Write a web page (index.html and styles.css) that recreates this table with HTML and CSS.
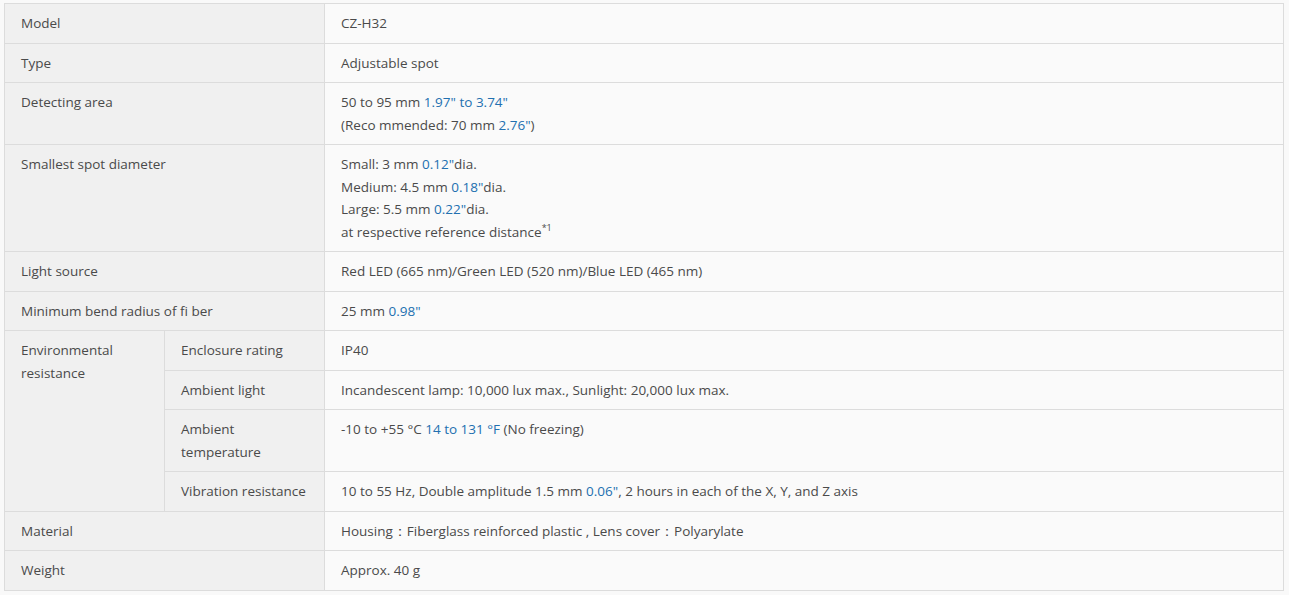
FILE: index.html
```html
<!DOCTYPE html>
<html lang="en">
<head>
<meta charset="utf-8">
<title>CZ-H32 Specifications</title>
<link rel="stylesheet" href="styles.css">
</head>
<body>
<table class="spec">
  <colgroup>
    <col class="c1"><col class="c2"><col class="c3">
  </colgroup>
  <tbody>
    <tr><th colspan="2">Model</th><td>CZ-H32</td></tr>
    <tr><th colspan="2">Type</th><td>Adjustable spot</td></tr>
    <tr><th colspan="2">Detecting area</th><td>50 to 95 mm <span class="imp">1.97" to 3.74"</span><br>(Reco mmended: 70 mm <span class="imp">2.76"</span>)</td></tr>
    <tr><th colspan="2">Smallest spot diameter</th><td>Small: 3 mm <span class="imp">0.12"</span>dia.<br>Medium: 4.5 mm <span class="imp">0.18"</span>dia.<br>Large: 5.5 mm <span class="imp">0.22"</span>dia.<br>at respective reference distance<sup>*1</sup></td></tr>
    <tr><th colspan="2">Light source</th><td>Red LED (665 nm)/Green LED (520 nm)/Blue LED (465 nm)</td></tr>
    <tr><th colspan="2">Minimum bend radius of fi ber</th><td>25 mm <span class="imp">0.98"</span></td></tr>
    <tr><th rowspan="4">Environmental resistance</th><th>Enclosure rating</th><td>IP40</td></tr>
    <tr><th>Ambient light</th><td>Incandescent lamp: 10,000 lux max., Sunlight: 20,000 lux max.</td></tr>
    <tr><th>Ambient temperature</th><td>-10 to +55 °C <span class="imp">14 to 131 °F</span> (No freezing)</td></tr>
    <tr><th>Vibration resistance</th><td>10 to 55 Hz, Double amplitude 1.5 mm <span class="imp">0.06"</span>, 2 hours in each of the X, Y, and Z axis</td></tr>
    <tr><th colspan="2">Material</th><td>Housing：Fiberglass reinforced plastic , Lens cover：Polyarylate</td></tr>
    <tr><th colspan="2">Weight</th><td>Approx. 40 g</td></tr>
  </tbody>
</table>
</body>
</html>
```
FILE: styles.css
```css
html, body {
  background: #f9f9f9;
}
body {
  margin: 3px 5px 0 4px;
  font-family: "Open Sans", "Noto Sans", "Liberation Sans", sans-serif;
  font-size: 13.5px;
  color: #4a4a4a;
}
.spec {
  width: 100%;
  border-collapse: collapse;
  table-layout: fixed;
}
.c1 { width: 160px; }
.c2 { width: 160px; }
.spec th, .spec td {
  border: 1px solid #dcdcdc;
  padding: 8px 16px;
  line-height: 22.5px;
  text-align: left;
  vertical-align: top;
  font-weight: normal;
}
.spec th {
  background: #f0f0f0;
}
.spec td {
  background: #fafafa;
}
.imp {
  color: #2270b0;
}
sup {
  font-size: 9px;
  line-height: 0;
  vertical-align: 6px;
}
```
